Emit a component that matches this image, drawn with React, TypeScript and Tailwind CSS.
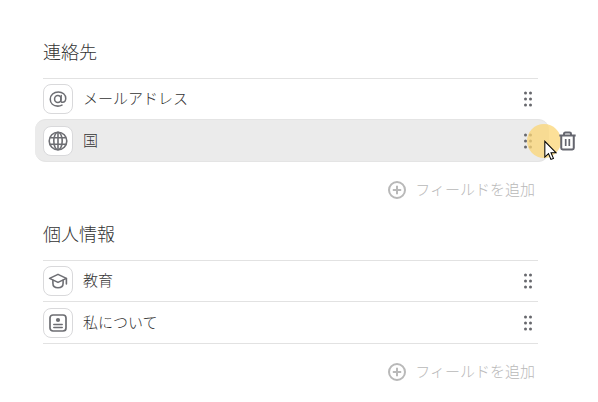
import React from 'react';

type IconProps = { className?: string };

const AtIcon = ({ className }: IconProps) => (
  <svg viewBox="0 0 20 20" fill="none" stroke="currentColor" strokeWidth="1.7" strokeLinecap="round" className={className}>
    <ellipse cx="9.8" cy="10" rx="3.6" ry="3.9" />
    <path d="M13.6 6.2l-.5 5c-.1 1.6.6 2.5 1.9 2.5 2.1 0 3.6-1.9 3.6-4.4 0-4.2-3.5-7.2-8.2-7.2-5.1 0-9 3.4-9 8.1 0 4.6 3.5 7.7 8.4 7.7 1.7 0 3.3-.4 4.6-1.1" />
  </svg>
);

const GlobeIcon = ({ className }: IconProps) => (
  <svg viewBox="0 0 20 20" fill="none" stroke="currentColor" strokeWidth="1.6" className={className}>
    <circle cx="10" cy="10" r="8.8" />
    <ellipse cx="10" cy="10" rx="4.2" ry="8.8" />
    <path d="M10 1.2v17.6M2 6.8h16M2 13.2h16" />
  </svg>
);

const EducationIcon = ({ className }: IconProps) => (
  <svg viewBox="0 0 20 20" fill="none" stroke="currentColor" strokeWidth="1.6" strokeLinejoin="round" strokeLinecap="round" className={className}>
    <path d="M1.6 7.4 10 3.4l8.4 4L10 11.4z" />
    <path d="M18.4 7.6v5.4M4.9 9.4v2.8c0 2.8 2.1 4.6 5.1 4.6s5.1-1.8 5.1-4.6V9.4" />
  </svg>
);

const AboutIcon = ({ className }: IconProps) => (
  <svg viewBox="0 0 20 20" fill="none" stroke="currentColor" strokeWidth="1.7" strokeLinecap="round" className={className}>
    <rect x="2" y="2" width="16" height="16" rx="3" />
    <circle cx="10" cy="7" r="2.1" fill="currentColor" stroke="none" />
    <path d="M5.8 11.5h8.4M5.8 14.6h8.4" strokeWidth="1.5" />
  </svg>
);

const DragIcon = ({ className }: IconProps) => (
  <svg viewBox="0 0 10 16" fill="currentColor" className={className}>
    <circle cx="2.5" cy="2" r="1.5" />
    <circle cx="7.5" cy="2" r="1.5" />
    <circle cx="2.5" cy="8" r="1.5" />
    <circle cx="7.5" cy="8" r="1.5" />
    <circle cx="2.5" cy="14" r="1.5" />
    <circle cx="7.5" cy="14" r="1.5" />
  </svg>
);

const AddIcon = ({ className }: IconProps) => (
  <svg viewBox="0 0 18 18" fill="none" stroke="currentColor" strokeWidth="2" className={className}>
    <circle cx="9" cy="9" r="8" />
    <path d="M9 4.8v8.4M4.8 9h8.4" />
  </svg>
);

const TrashIcon = ({ className }: IconProps) => (
  <svg viewBox="0 0 16 18" fill="none" stroke="currentColor" strokeWidth="1.9" className={className}>
    <path d="M.3 3.8h15.4M2.1 3.8v11.8c0 .9.5 1.4 1.4 1.4h9c.9 0 1.4-.5 1.4-1.4V3.8M4.7 3.6V2.4c0-.9.4-1.3 1.3-1.3h4c.9 0 1.3.4 1.3 1.3v1.2" />
    <path d="M6.3 7v6.6M9.7 7v6.6" strokeWidth="1.6" />
  </svg>
);

const CursorIcon = ({ className }: IconProps) => (
  <svg viewBox="0 0 12 20" fill="white" stroke="black" strokeWidth="1" className={className}>
    <path d="M.6 1.2v15l3.5-3.3 2.3 5.6 2.4-1-2.3-5.4h4.7z" />
  </svg>
);

const FieldIcon = ({ children }: { children: React.ReactNode }) => (
  <div className="flex size-[30px] items-center justify-center rounded-lg border border-[#d9d9db] bg-white text-[#6d6e73]">
    {children}
  </div>
);

const AddField = () => (
  <div className="mt-4 flex h-6 items-center justify-end gap-[9px] pr-[3px] text-[#b9b9b9]">
    <AddIcon className="size-[18px]" />
    <span className="pb-[2px] text-[15px] leading-[22px]">フィールドを追加</span>
  </div>
);

const App = () => {
  return (
    <main
      className="h-[402px] w-[598px] overflow-hidden bg-white pl-[43px] pr-[60px] pt-[37px] font-light text-[#333]"
      style={{ fontFamily: '"Noto Sans CJK JP", sans-serif' }}
    >
      {/*contact*/}
      <section>
        <h2 className="h-[41px] text-lg leading-7">連絡先</h2>
        <div className="flex h-[41px] items-center border-t border-[#e2e2e2]">
          <FieldIcon>
            <AtIcon className="size-[18px]" />
          </FieldIcon>
          <span className="ml-2.5 pb-[2px] text-[15px]">メールアドレス</span>
          <DragIcon className="ml-auto mr-[5px] h-4 w-2.5 text-[#67686d]" />
        </div>
        {/*hovered row*/}
        <div className="relative -ml-2 -mr-[11px] flex h-[43px] items-center rounded-[11px] border-y border-[#e4e4e4] bg-[#ebebeb] pl-2 pr-4">
          <FieldIcon>
            <GlobeIcon className="size-5" />
          </FieldIcon>
          <span className="ml-2.5 pb-px text-[15px]">国</span>
          <DragIcon className="ml-auto h-4 w-2.5 text-[#67686d]" />
          <span className="absolute -right-[12px] top-[4px] size-[34px] rounded-full bg-[#fbd575]/75" />
          <TrashIcon className="absolute -right-[27px] top-[11px] h-[20px] w-[17px] text-[#65666f]" />
          <CursorIcon className="absolute -right-[8px] top-[20px] h-[21px] w-[13px]" />
        </div>
        <AddField />
      </section>

      {/*personal info*/}
      <section className="mt-[17px]">
        <h2 className="h-[41px] text-lg leading-7">個人情報</h2>
        <div className="flex h-[41px] items-center border-t border-[#e2e2e2]">
          <FieldIcon>
            <EducationIcon className="size-[20px]" />
          </FieldIcon>
          <span className="ml-2.5 pb-px text-[15px]">教育</span>
          <DragIcon className="ml-auto mr-[5px] h-4 w-2.5 text-[#67686d]" />
        </div>
        <div className="flex h-[43px] items-center border-y border-[#e2e2e2]">
          <FieldIcon>
            <AboutIcon className="size-5" />
          </FieldIcon>
          <span className="ml-2.5 text-[15px]">私について</span>
          <DragIcon className="ml-auto mr-[5px] h-4 w-2.5 text-[#67686d]" />
        </div>
        <AddField />
      </section>
    </main>
  );
};

export default App;
